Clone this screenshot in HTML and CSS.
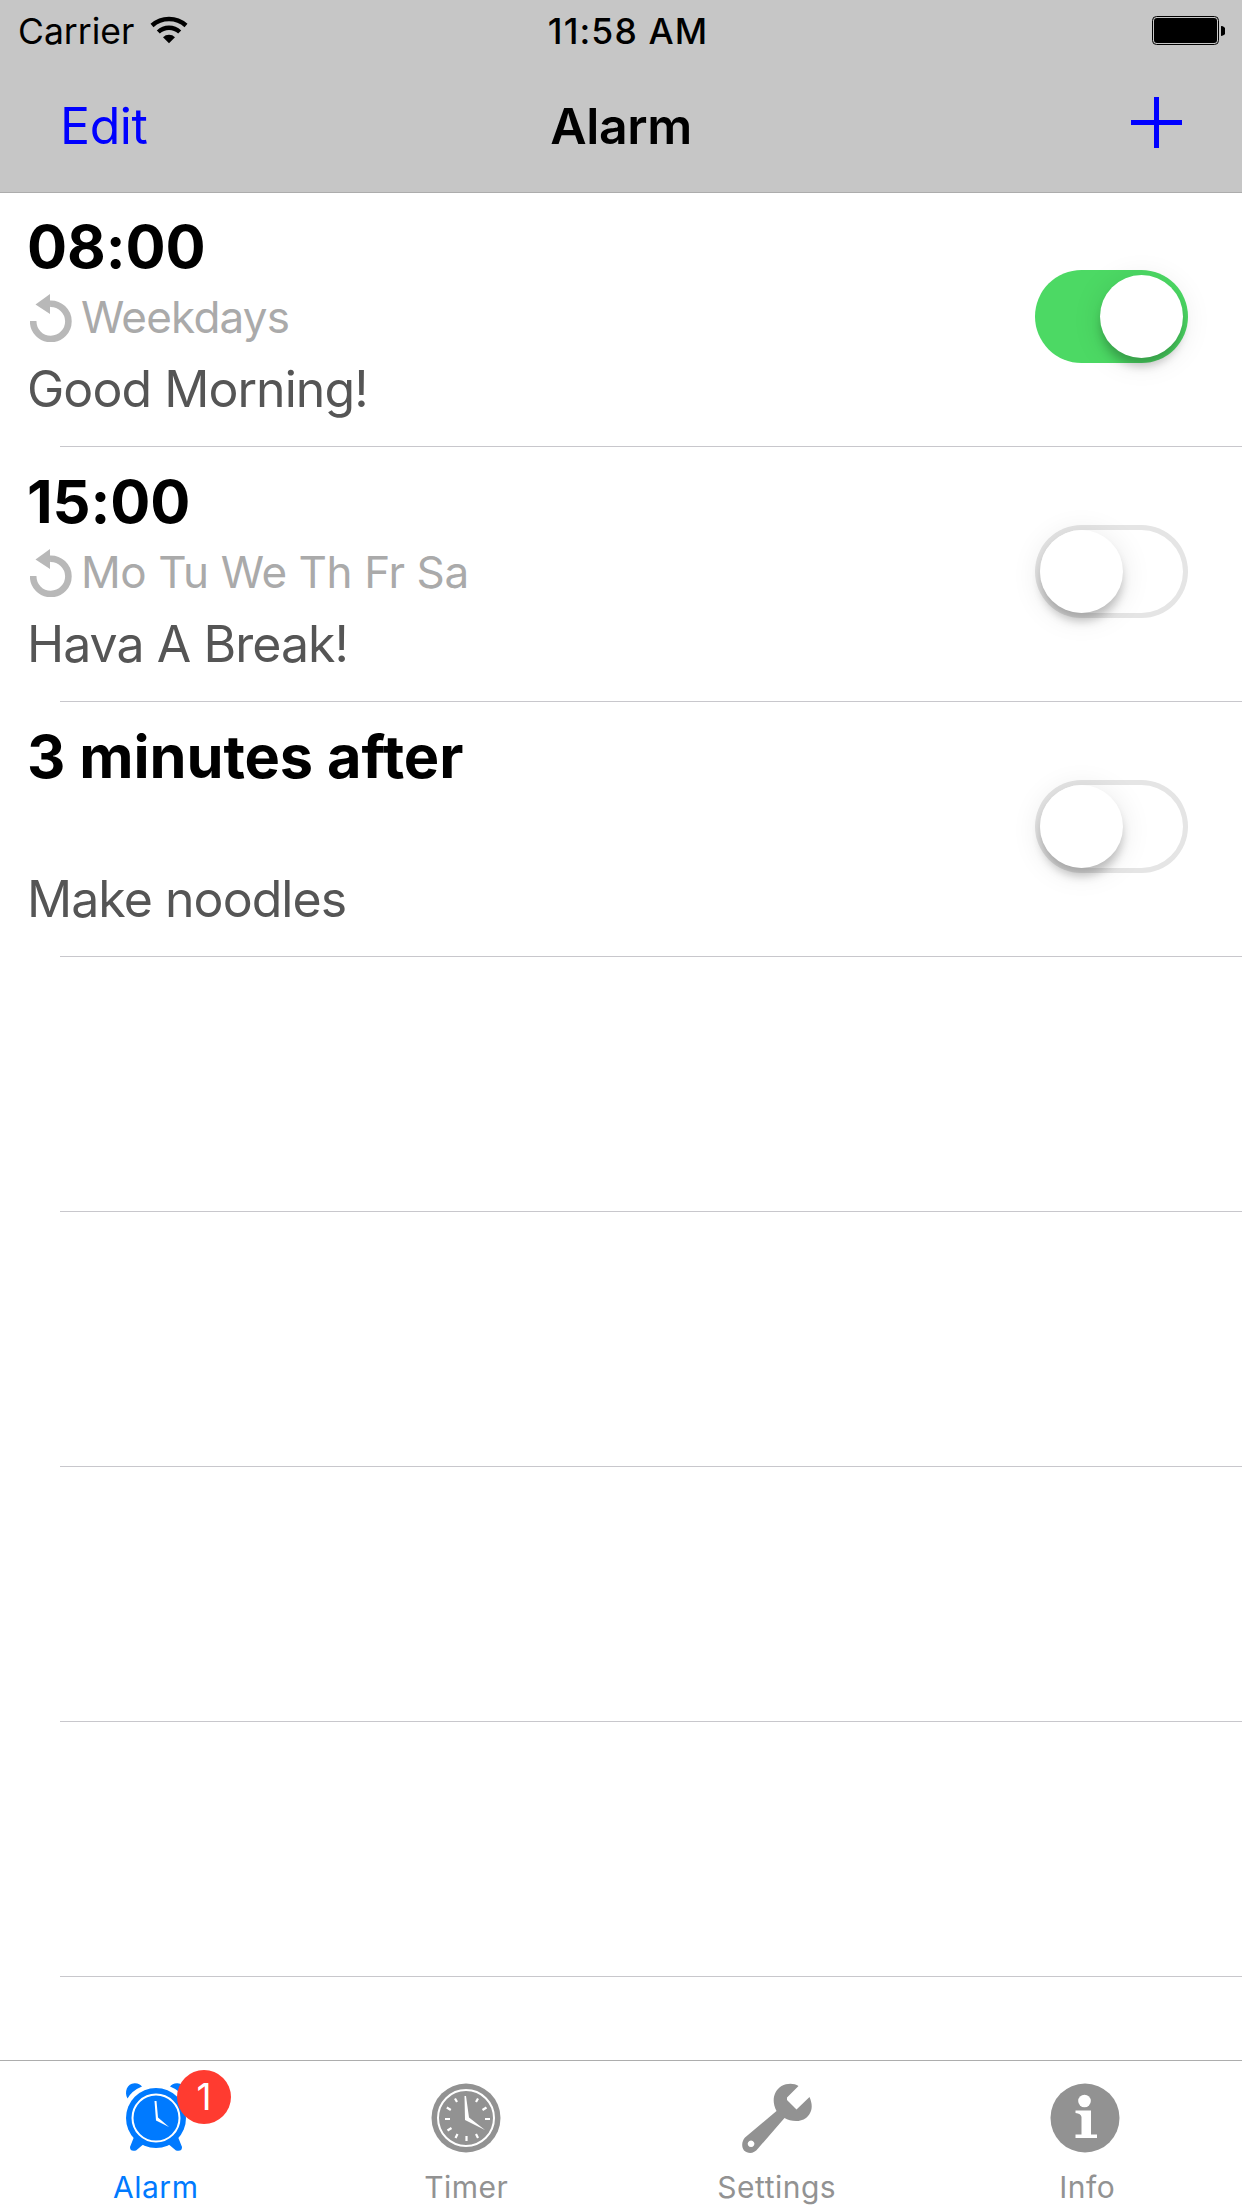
FILE: index.html
```
<!DOCTYPE html>
<html lang="en">
<head>
  <meta charset="UTF-8">
  <title>Alarm</title>
  <link rel="stylesheet" href="styles.css">
</head>
<body>

  <header class="header">
    <div class="status-bar">
      <div class="carrier">
        <span class="carrier-name">Carrier</span>
        <svg class="wifi" viewBox="0 0 38 28" width="38" height="28">
          <path d="M2 9.5A25.5 25.5 0 0 1 36 9.5" fill="none" stroke="#000" stroke-width="4.4"/>
          <path d="M8.3 16A15.6 15.6 0 0 1 29.7 16" fill="none" stroke="#000" stroke-width="4.4"/>
          <path d="M13 21.2A8.8 8.8 0 0 1 25 21.2L19 27.2Z"/>
        </svg>
      </div>
      <span class="clock">11:58 AM</span>
      <svg class="battery" viewBox="0 0 73 29" width="73" height="29">
        <rect x="0.5" y="0.5" width="66" height="28" rx="4" fill="none" stroke="#000"/>
        <rect x="2" y="2" width="63" height="25" rx="3"/>
        <path d="M69 10A5 5 0 0 1 69 20Z"/>
      </svg>
    </div>
    <nav class="nav-bar">
      <a class="edit">Edit</a>
      <h1 class="title">Alarm</h1>
      <svg class="add" viewBox="0 0 51 51" width="51" height="51">
        <path d="M23 0h5v23h23v5H28v23h-5V28H0v-5h23z" fill="#00f"/>
      </svg>
    </nav>
  </header>

  <ul class="alarms">
    <li class="alarm">
      <div class="info">
        <div class="time">08:00</div>
        <div class="repeat">
          <svg class="repeat-icon" viewBox="0 0 42 48" width="42" height="48">
            <path d="M3.2 27A17.600 17.600 0 1 0 20 9.800" fill="none" stroke="#b8b8b8" stroke-width="6.600"/>
            <path d="M5.5 10.5L20 0v20z" fill="#b8b8b8"/>
          </svg>
          <span class="days weekdays">Weekdays</span>
        </div>
        <div class="label">Good Morning!</div>
      </div>
      <div class="switch on"><div class="knob"></div></div>
    </li>
    <li class="alarm">
      <div class="info">
        <div class="time">15:00</div>
        <div class="repeat">
          <svg class="repeat-icon" viewBox="0 0 42 48" width="42" height="48">
            <path d="M3.2 27A17.600 17.600 0 1 0 20 9.800" fill="none" stroke="#b8b8b8" stroke-width="6.600"/>
            <path d="M5.5 10.5L20 0v20z" fill="#b8b8b8"/>
          </svg>
          <span class="days">Mo Tu We Th Fr Sa</span>
        </div>
        <div class="label">Hava A Break!</div>
      </div>
      <div class="switch"><div class="knob"></div></div>
    </li>
    <li class="alarm">
      <div class="info">
        <div class="time">3 minutes after</div>
        <div class="repeat"></div>
        <div class="label">Make noodles</div>
      </div>
      <div class="switch"><div class="knob"></div></div>
    </li>
    <li class="alarm"></li>
    <li class="alarm"></li>
    <li class="alarm"></li>
    <li class="alarm"></li>
  </ul>

  <footer class="tab-bar">
    <a class="tab active">
      <svg class="tab-icon" viewBox="0 0 70 70" width="70" height="70">
        <g fill="#007aff">
          <circle cx="35" cy="35" r="30"/>
          <path d="M6.500 15.500C3 9 6 0.500 13.500 0.200C17 0 19.500 1.500 21 3.500Q11 7.500 6.500 15.500z"/>
          <path d="M63.500 15.500C67 9 64 0.500 56.500 0.200C53 0 50.500 1.500 49 3.500Q59 7.500 63.500 15.500z"/>
          <path d="M13 54L9 64Q9 69 15 67.500L24 60z"/>
          <path d="M57 54L61 64Q61 69 55 67.500L46 60z"/>
        </g>
        <circle cx="35" cy="35" r="23.500" fill="none" stroke="#fff" stroke-width="2"/>
        <path d="M33.500 18h2l1.500 16.500L48 44l-13-6.500z" fill="#fff"/>
      </svg>
      <span class="badge">1</span>
      <span class="tab-label">Alarm</span>
    </a>
    <a class="tab">
      <svg class="tab-icon" viewBox="0 0 70 70" width="70" height="70">
        <circle cx="35" cy="35" r="34.500" fill="#929292"/>
        <circle cx="35" cy="35" r="28" fill="none" stroke="#fff" stroke-width="2"/>
        <path d="M24 15.500l2 3.500M15.800 24.500l4 2.500M14 36h5M16.500 47.500l4-2.500M24.500 55l2-4M35.500 58v-5M47 55l-2-4M54 36h5M51.500 27l4-2.500M45 19l2-3.500" fill="none" stroke="#fff" stroke-width="2.200"/>
        <path d="M33.500 13h1.500l3 21.500L54 47 34 37z" fill="#fff"/>
      </svg>
      <span class="tab-label">Timer</span>
    </a>
    <a class="tab">
      <svg class="tab-icon" viewBox="0 0 70 70" width="70" height="70">
        <path d="M56.500 3L45 14.500V17L54.500 26.500L67.500 14C72 24 69 31 64 35C57 40 48 38 42.500 35L16 65.500C12 71 6 71 2 67.500C-1 63 0 58 3 54.500L34.500 28C29 17 32 8 39.500 3C45 0 52 0 56.500 3ZM9 57.500a3.300 3.300 0 1 0 .1 0z" fill="#929292" fill-rule="evenodd"/>
      </svg>
      <span class="tab-label">Settings</span>
    </a>
    <a class="tab">
      <svg class="tab-icon info-icon" viewBox="0 0 70 70" width="70" height="70">
        <circle cx="35" cy="35" r="34.500" fill="#929292"/>
        <circle cx="34.500" cy="18" r="6.300" fill="#fff"/>
        <path d="M25.500 27.500H41V51.500H47V55H25.500V51.500H31.500V34Q31 30.500 25.500 30z" fill="#fff"/>
      </svg>
      <span class="tab-label">Info</span>
    </a>
  </footer>

</body>
</html>
```

FILE: styles.css
```
* {
  box-sizing: border-box;
}
body {
  margin: 0;
  height: 2208px;
  display: flex;
  flex-direction: column;
  overflow: hidden;
  font-family: Inter, "Liberation Sans", sans-serif;
  background: #fff;
  color: #000;
}
.header {
  height: 193px;
  flex: none;
  background: #c6c6c6;
  border-bottom: 1px solid #acacac;
}
.status-bar {
  height: 62px;
  padding: 0 17px 0 18px;
  display: grid;
  grid-template-columns: 1fr auto 1fr;
  align-items: center;
  font-size: 35.5px;
}
.carrier {
  display: flex;
  align-items: center;
  gap: 16px;
}
.wifi {
  margin-top: -3px;
}
.clock {
  padding-left: 13px;
  font-weight: 550;
  letter-spacing: 1.1px;
}
.battery {
  justify-self: end;
  margin-bottom: 1px;
}
.nav-bar {
  height: 128px;
  padding: 0 60px;
  display: grid;
  grid-template-columns: 1fr auto 1fr;
  align-items: center;
  font-size: 50px;
}
.edit {
  color: #00f;
  letter-spacing: -0.4px;
}
.title {
  margin: 0;
  font-size: 50px;
  font-weight: 600;
  letter-spacing: -0.4px;
}
.add {
  justify-self: end;
  margin-bottom: 7px;
}
.alarms {
  margin: -1px 0 0;
  padding: 0;
  flex: 1;
  min-height: 0;
  overflow: hidden;
  list-style: none;
}
.alarm {
  height: 255px;
  padding: 20px 54px 0 27px;
  display: flex;
  justify-content: space-between;
  background: linear-gradient(#c8c7cc, #c8c7cc) 60px 100% / 100% 1px no-repeat;
}
.time {
  height: 70px;
  line-height: 69px;
  font-size: 59.5px;
  font-weight: 700;
  letter-spacing: -0.1px;
}
.repeat {
  height: 72px;
  padding-left: 3px;
  display: flex;
  align-items: center;
  gap: 9px;
  font-size: 44px;
  color: #aaa;
}
.days {
  margin-top: -2px;
  letter-spacing: -0.4px;
}
.weekdays {
  letter-spacing: -0.8px;
}
.label {
  height: 72px;
  line-height: 70px;
  font-size: 50px;
  letter-spacing: -0.95px;
  color: #555;
}
.switch {
  width: 153px;
  height: 93px;
  margin-top: 58px;
  padding: 5px;
  display: flex;
  border-radius: 47px;
  box-shadow: inset 0 0 0 5px #e5e5e5;
}
.switch.on {
  justify-content: flex-end;
  background: #4cd964;
  box-shadow: none;
}
.knob {
  width: 83px;
  height: 83px;
  border-radius: 50%;
  background: #fff;
  box-shadow: 0 9px 10px -1px rgba(0, 0, 0, 0.22), 0 4px 30px rgba(0, 0, 0, 0.1);
}
.tab-bar {
  height: 148px;
  flex: none;
  display: flex;
  background: #fff;
  border-top: 1px solid #adadad;
}
.tab {
  position: relative;
  flex: 1;
  padding: 22px 0 0 1px;
  display: flex;
  flex-direction: column;
  align-items: center;
  color: #929292;
}
.tab.active {
  color: #007aff;
}
.info-icon {
  margin-left: -4px;
}
.tab-label {
  margin-top: 14px;
  line-height: 40px;
  font-size: 30px;
  letter-spacing: 0.5px;
}
.badge {
  position: absolute;
  top: 9px;
  left: 177px;
  width: 54px;
  height: 54px;
  border-radius: 50%;
  background: #ff3b30;
  color: #fff;
  font-size: 37px;
  line-height: 54px;
  text-align: center;
}
```
